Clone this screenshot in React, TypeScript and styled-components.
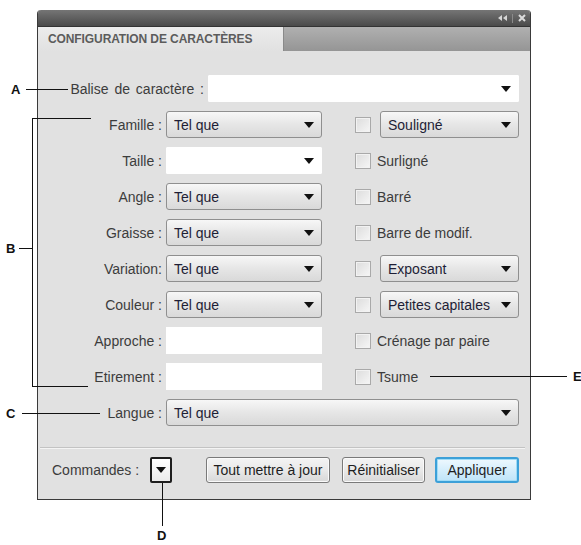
import React from 'react';
import styled, { createGlobalStyle } from 'styled-components';

const GlobalStyle = createGlobalStyle`
  html, body {
    margin: 0;
    padding: 0;
    background: #ffffff;
  }
  body {
    font-family: "Liberation Sans", Arial, sans-serif;
  }
`;

const Stage = styled.div`
  position: relative;
  width: 581px;
  height: 545px;
  padding: 10px 0 0 37px;
  box-sizing: border-box;
  overflow: hidden;
`;

const Panel = styled.div`
  width: 494px;
  height: 490px;
  box-sizing: border-box;
  border: 1px solid #3a3a3a;
  border-top: none;
  border-radius: 4px 4px 0 0;
  background: #e1e1e1;
  display: flex;
  flex-direction: column;
  overflow: hidden;
`;

const TitleBar = styled.div`
  height: 17px;
  margin: 0 -1px;
  border-radius: 4px 4px 0 0;
  background: linear-gradient(#757575, #4a4a4a);
  border-bottom: 1px solid #333333;
  box-sizing: border-box;
  display: flex;
  align-items: center;
  justify-content: flex-end;
  gap: 5px;
  padding-right: 5px;
`;

const TitleSep = styled.span`
  width: 1px;
  height: 9px;
  background: #8a8a8a;
`;

const TabRow = styled.div`
  height: 24px;
  display: flex;
  background: linear-gradient(#b0b0b0, #959595);
`;

const Tab = styled.div`
  width: 246px;
  background: linear-gradient(#ececec, #e1e1e1);
  border-right: 1px solid #8a8a8a;
  display: flex;
  align-items: center;
  padding-left: 10px;
  box-sizing: border-box;
  font-size: 12px;
  font-weight: bold;
  color: #5c5c5c;
  letter-spacing: -0.1px;
  white-space: nowrap;
`;

const FormBody = styled.div`
  display: flex;
  flex-direction: column;
  gap: 9px;
  padding-top: 24px;
`;

const Row = styled.div`
  display: flex;
  align-items: center;
  height: 27px;
`;

const Label = styled.span<{ $width?: number; $spread?: boolean }>`
  width: ${p => p.$width ?? 124}px;
  margin-right: 4px;
  text-align: right;
  font-size: 14px;
  color: #3c3c3c;
  white-space: nowrap;
  word-spacing: ${p => (p.$spread ? '2px' : 'normal')};
`;

const SelectBox = styled.div<{ $width: number; $white?: boolean }>`
  width: ${p => p.$width}px;
  height: 27px;
  box-sizing: border-box;
  border: 1px solid ${p => (p.$white ? '#ffffff' : '#8f8f8f')};
  border-radius: ${p => (p.$white ? '1px' : '3px')};
  background: ${p => (p.$white ? '#ffffff' : 'linear-gradient(#f7f7f7, #e6e6e6 50%, #d9d9d9)')};
  display: flex;
  align-items: center;
  justify-content: space-between;
  padding: 0 7px 0 7px;
  font-size: 14px;
  color: #1e1e36;
  white-space: nowrap;
`;

const TextField = styled.div<{ $width: number }>`
  width: ${p => p.$width}px;
  height: 27px;
  background: #ffffff;
`;

const RightCell = styled.div`
  margin-left: 33px;
  display: flex;
  align-items: center;
`;

const CheckBox = styled.span`
  width: 16px;
  height: 16px;
  box-sizing: border-box;
  border: 1px solid #a9a9a9;
  background: linear-gradient(135deg, #dcdcdc, #f6f6f6);
  box-shadow: inset 0 0 0 1px #f2f2f2;
`;

const CheckText = styled.span`
  margin-left: 6px;
  font-size: 14px;
  color: #3c3c3c;
  white-space: nowrap;
`;

const RightSelect = styled(SelectBox)`
  margin-left: 9px;
`;

const Divider = styled.div`
  margin: 21px 5px 0 2px;
  border-top: 1px solid #c3c3c3;
  border-bottom: 1px solid #f4f4f4;
`;

const Footer = styled.div`
  display: flex;
  align-items: center;
  padding: 8px 0 0 14px;
`;

const CommandLabel = styled.span`
  width: 98px;
  font-size: 14px;
  color: #3c3c3c;
  white-space: nowrap;
`;

const MenuButton = styled.div`
  width: 22px;
  height: 26px;
  box-sizing: border-box;
  border: 2px solid #1e1e1e;
  border-radius: 2px;
  background: linear-gradient(#ffffff, #ececec);
  display: flex;
  align-items: center;
  justify-content: center;
  margin-right: 34px;
`;

const Button = styled.div<{ $width: number; $primary?: boolean }>`
  width: ${p => p.$width}px;
  height: 26px;
  box-sizing: border-box;
  border: ${p => (p.$primary ? '2px solid #3ca0d8' : '1px solid #7a7a7a')};
  border-radius: 3px;
  background: ${p =>
    p.$primary
      ? 'linear-gradient(#eef8fe, #d5eefc 50%, #bfe4f9)'
      : 'linear-gradient(#f4f4f4, #e9e9e9 50%, #d8d8d8)'};
  box-shadow: inset 0 0 0 1px ${p => (p.$primary ? '#9fdcf7' : '#fafafa')};
  display: flex;
  align-items: center;
  justify-content: center;
  font-size: 14px;
  color: #1e1e1e;
  white-space: nowrap;
`;

const ButtonGap = styled.span<{ $w: number }>`
  width: ${p => p.$w}px;
`;

/* callouts drawn over the panel */
const Overlay = styled.div`
  position: absolute;
  inset: 0;
  pointer-events: none;
`;

const HLine = styled.div<{ $x: number; $y: number; $w: number }>`
  position: absolute;
  left: ${p => p.$x}px;
  top: ${p => p.$y}px;
  width: ${p => p.$w}px;
  height: 1px;
  background: #111111;
`;

const VLine = styled.div<{ $x: number; $y: number; $h: number }>`
  position: absolute;
  left: ${p => p.$x}px;
  top: ${p => p.$y}px;
  width: 1px;
  height: ${p => p.$h}px;
  background: #111111;
`;

const Letter = styled.span<{ $x: number; $y: number }>`
  position: absolute;
  left: ${p => p.$x}px;
  top: ${p => p.$y}px;
  font-size: 13px;
  font-weight: bold;
  color: #111111;
  line-height: 13px;
`;

const Arrow = () => (
  <svg width="10" height="6" viewBox="0 0 10 6">
    <path d="M0 0H10L5 6Z" fill="#111" />
  </svg>
);

const CollapseIcon = () => (
  <svg width="9" height="6" viewBox="0 0 9 6">
    <path d="M4 0V6L0 3Z M9 0V6L5 3Z" fill="#d6d6d6" />
  </svg>
);

const CloseIcon = () => (
  <svg width="8" height="8" viewBox="0 0 8 8">
    <path d="M1 1L7 7M7 1L1 7" stroke="#dcdcdc" strokeWidth="2" />
  </svg>
);

type Right =
  | { kind: 'check'; text: string }
  | { kind: 'select'; text: string };

type Field = { label: string; control: 'select' | 'combo' | 'text'; right?: Right };

const fields: Field[] = [
  { label: 'Famille :', control: 'select', right: { kind: 'select', text: 'Souligné' } },
  { label: 'Taille :', control: 'combo', right: { kind: 'check', text: 'Surligné' } },
  { label: 'Angle :', control: 'select', right: { kind: 'check', text: 'Barré' } },
  { label: 'Graisse :', control: 'select', right: { kind: 'check', text: 'Barre de modif.' } },
  { label: 'Variation:', control: 'select', right: { kind: 'select', text: 'Exposant' } },
  { label: 'Couleur :', control: 'select', right: { kind: 'select', text: 'Petites capitales' } },
  { label: 'Approche :', control: 'text', right: { kind: 'check', text: 'Crénage par paire' } },
  { label: 'Etirement :', control: 'text', right: { kind: 'check', text: 'Tsume' } },
];

const Control = ({ type }: { type: Field['control'] }) => {
  if (type === 'text') return <TextField $width={156} />;
  return (
    <SelectBox $width={156} $white={type === 'combo'}>
      <span>{type === 'select' ? 'Tel que' : ''}</span>
      <Arrow />
    </SelectBox>
  );
};

const App = () => (
  <>
    <GlobalStyle />
    <Stage>
      <Panel>
        <TitleBar>
          <CollapseIcon />
          <TitleSep />
          <CloseIcon />
        </TitleBar>
        <TabRow>
          <Tab>CONFIGURATION DE CARACTÈRES</Tab>
        </TabRow>

        <FormBody>
          <Row>
            <Label $width={166} $spread>Balise de caractère :</Label>
            <SelectBox $width={311} $white>
              <span />
              <Arrow />
            </SelectBox>
          </Row>

          {fields.map(f => (
            <Row key={f.label}>
              <Label>{f.label}</Label>
              <Control type={f.control} />
              {f.right && (
                <RightCell>
                  <CheckBox />
                  {f.right.kind === 'check' ? (
                    <CheckText>{f.right.text}</CheckText>
                  ) : (
                    <RightSelect $width={139}>
                      <span>{f.right.text}</span>
                      <Arrow />
                    </RightSelect>
                  )}
                </RightCell>
              )}
            </Row>
          ))}

          <Row>
            <Label>Langue :</Label>
            <SelectBox $width={353}>
              <span>Tel que</span>
              <Arrow />
            </SelectBox>
          </Row>
        </FormBody>

        <Divider />

        <Footer>
          <CommandLabel>Commandes :</CommandLabel>
          <MenuButton>
            <Arrow />
          </MenuButton>
          <Button $width={124}>Tout mettre à jour</Button>
          <ButtonGap $w={12} />
          <Button $width={83}>Réinitialiser</Button>
          <ButtonGap $w={10} />
          <Button $width={84} $primary>Appliquer</Button>
        </Footer>
      </Panel>

      <Overlay>
        <Letter $x={11} $y={83}>A</Letter>
        <HLine $x={26} $y={89} $w={42} />

        <Letter $x={6} $y={242}>B</Letter>
        <HLine $x={19} $y={248} $w={13} />
        <VLine $x={32} $y={118} $h={269} />
        <HLine $x={32} $y={118} $w={59} />
        <HLine $x={32} $y={386} $w={56} />

        <Letter $x={6} $y={407}>C</Letter>
        <HLine $x={22} $y={413} $w={78} />

        <VLine $x={162} $y={483} $h={43} />
        <Letter $x={157} $y={529}>D</Letter>

        <HLine $x={430} $y={376} $w={137} />
        <Letter $x={573} $y={370}>E</Letter>
      </Overlay>
    </Stage>
  </>
);

export default App;
